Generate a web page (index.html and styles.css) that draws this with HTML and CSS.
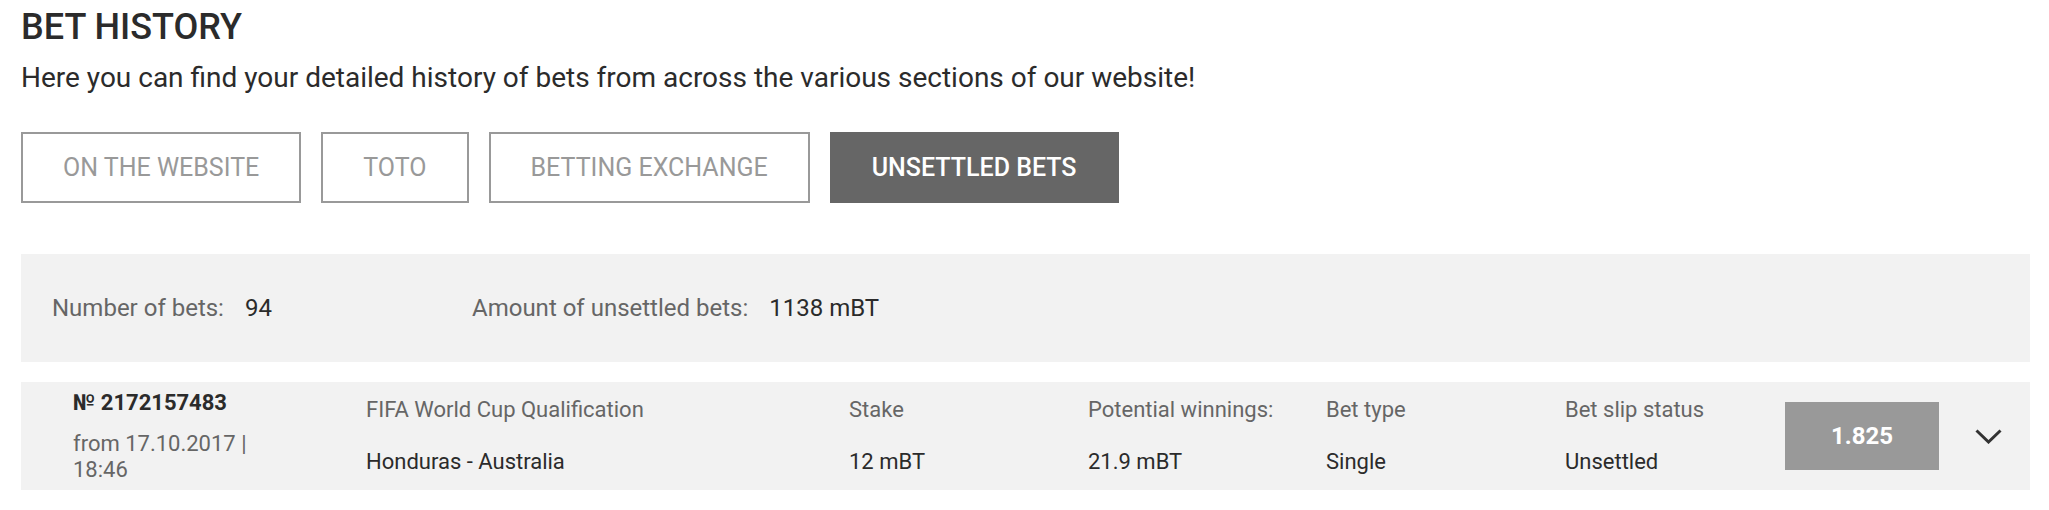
FILE: index.html
```html
<!DOCTYPE html>
<html lang="en">
  <head>
    <meta charset="UTF-8" />
    <meta name="viewport" content="width=device-width, initial-scale=1.0" />
    <title>Bet history</title>
    <link rel="stylesheet" href="styles.css">
  </head>
  <body>
    <div class="page">
      <h1 class="title">BET HISTORY</h1>
      <p class="intro">
        Here you can find your detailed history of bets from across the various sections of our website!
      </p>

      <div class="tabs">
        <button class="tab">ON THE WEBSITE</button>
        <button class="tab">TOTO</button>
        <button class="tab">BETTING EXCHANGE</button>
        <button class="tab active">UNSETTLED BETS</button>
      </div>

      <div class="summary">
        <div class="stat">
          <span class="stat-label">Number of bets:</span>
          <span class="stat-value">94</span>
        </div>
        <div class="stat">
          <span class="stat-label">Amount of unsettled bets:</span>
          <span class="stat-value">1138 mBT</span>
        </div>
      </div>

      <div class="bets">
        <div class="bet">
          <div class="bet-id">
            <b>№ 2172157483</b>
            <span class="bet-date">from 17.10.2017 |<br />18:46</span>
          </div>
          <div class="cell">
            <span class="label">FIFA World Cup Qualification</span>
            <span class="value">Honduras - Australia</span>
          </div>
          <div class="cell">
            <span class="label">Stake</span>
            <span class="value">12 mBT</span>
          </div>
          <div class="cell">
            <span class="label">Potential winnings:</span>
            <span class="value">21.9 mBT</span>
          </div>
          <div class="cell">
            <span class="label">Bet type</span>
            <span class="value">Single</span>
          </div>
          <div class="cell">
            <span class="label">Bet slip status</span>
            <span class="value">Unsettled</span>
          </div>
          <div class="odds">1.825</div>
          <button class="toggle">
            <svg width="27" height="15" viewBox="0 0 27 15">
              <polyline points="1.5,1.5 13.5,13 25.5,1.5" fill="none" stroke="#333" stroke-width="3" />
            </svg>
          </button>
        </div>

        <div class="bet">
          <div class="bet-id">
            <b>№ 2172157102</b>
            <span class="bet-date">from 17.10.2017 |<br />18:40</span>
          </div>
          <div class="cell">
            <span class="label">FIFA World Cup Qualification</span>
            <span class="value">Honduras - Australia</span>
          </div>
          <div class="cell">
            <span class="label">Stake</span>
            <span class="value">10 mBT</span>
          </div>
          <div class="cell">
            <span class="label">Potential winnings:</span>
            <span class="value">18.2 mBT</span>
          </div>
          <div class="cell">
            <span class="label">Bet type</span>
            <span class="value">Single</span>
          </div>
          <div class="cell">
            <span class="label">Bet slip status</span>
            <span class="value">Unsettled</span>
          </div>
          <div class="odds">1.825</div>
          <button class="toggle">
            <svg width="27" height="15" viewBox="0 0 27 15">
              <polyline points="1.5,1.5 13.5,13 25.5,1.5" fill="none" stroke="#333" stroke-width="3" />
            </svg>
          </button>
        </div>
      </div>
    </div>
  </body>
</html>
```

FILE: styles.css
```css
body {
  margin: 0;
  font-family: Roboto, "Liberation Sans", sans-serif;
  color: #333333;
  background: #ffffff;
}

.page {
  padding: 6px 19px 0 21px;
}

.title {
  margin: 0;
  font-size: 36px;
  line-height: 42px;
  font-weight: 500;
  color: #2b2b2b;
}

.intro {
  margin: 14px 0 0;
  font-size: 28px;
  line-height: 32px;
  color: #2b2b2b;
}

.tabs {
  display: flex;
  gap: 20px;
  margin-top: 38px;
}
.tab {
  box-sizing: border-box;
  min-width: 142px;
  height: 71px;
  padding: 0 40px;
  border: 2px solid #999999;
  background: #ffffff;
  color: #999999;
  font-family: inherit;
  font-size: 25px;
  text-transform: uppercase;
}
.tab.active {
  background: #666666;
  border-color: #666666;
  color: #ffffff;
  font-weight: 500;
}

.summary {
  display: flex;
  align-items: center;
  height: 108px;
  margin-top: 51px;
  padding-left: 31px;
  background: #f2f2f2;
  font-size: 24px;
  line-height: 28px;
}
.stat {
  display: flex;
  gap: 21px;
  width: 420px;
}
.stat-label {
  color: #666666;
}
.stat-value {
  color: #2b2b2b;
}

.bets {
  display: flex;
  flex-direction: column;
  gap: 20px;
  margin-top: 20px;
}
.bet {
  display: grid;
  grid-template-columns: 293px 483px 239px 238px 239px 220px 154px 27px;
  align-items: center;
  height: 108px;
  padding-left: 52px;
  background: #f2f2f2;
  font-size: 22px;
  line-height: 26px;
}
.bet-id {
  display: flex;
  flex-direction: column;
  gap: 15px;
  padding-top: 1px;
  color: #2b2b2b;
}
.bet-date {
  color: #666666;
}
.cell {
  display: flex;
  flex-direction: column;
  gap: 26px;
}
.label {
  color: #666666;
}
.value {
  color: #2b2b2b;
}
.odds {
  display: flex;
  align-items: center;
  justify-content: center;
  height: 68px;
  background: #999999;
  color: #ffffff;
  font-size: 24px;
  font-weight: 700;
}
.toggle {
  margin-left: 36px;
  width: 27px;
  padding: 0;
  border: none;
  background: none;
  display: flex;
}
```
